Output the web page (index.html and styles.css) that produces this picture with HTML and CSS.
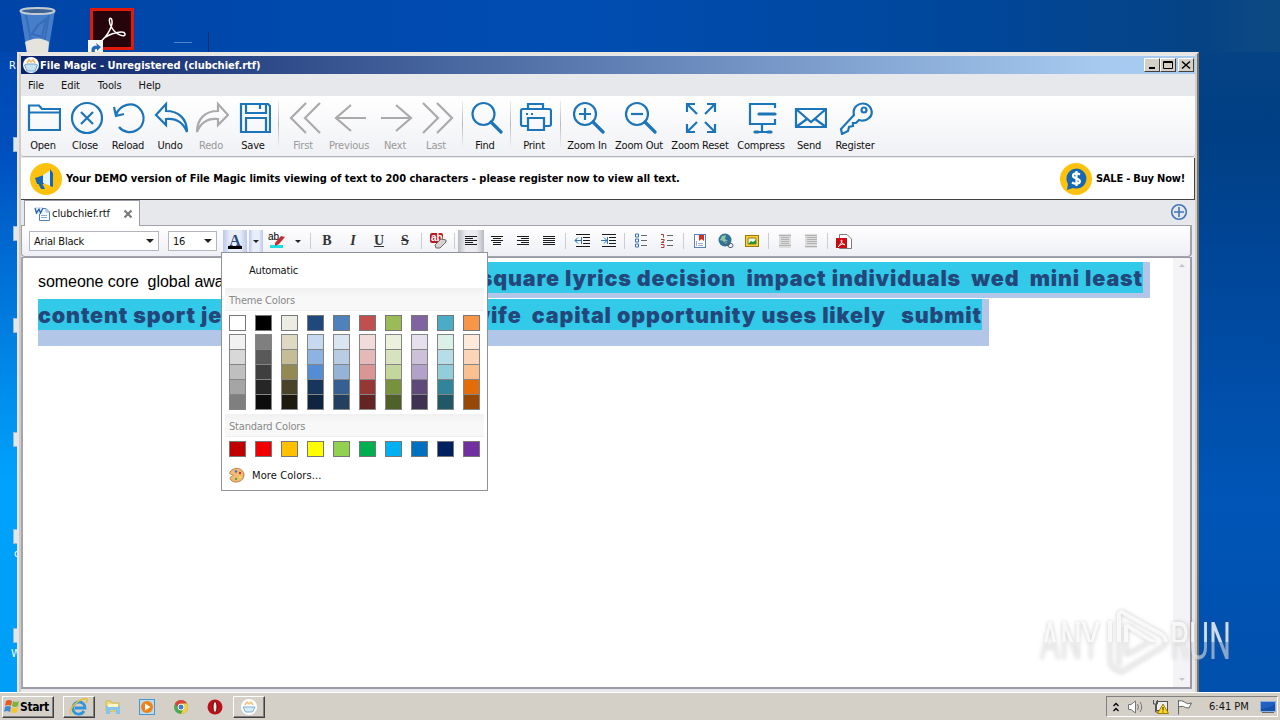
FILE: index.html
```
<!DOCTYPE html>
<html lang="en">
  <head>
    <meta charset="UTF-8" />
    <meta name="viewport" content="width=device-width, initial-scale=1.0" />
    <title>File Magic - Unregistered (clubchief.rtf)</title>
    <link rel="stylesheet" href="styles.css">
  </head>
  <body>
    <div class="desktop">
      <!-- desktop icons -->
      <svg class="desk-icon bin" width="40" height="48" viewBox="0 0 40 48">
        <path d="M2 3 L37 3 L30 46 Q20 52 9 46Z" fill="#5f92d6" opacity=".75" />
        <path d="M8 8 L15 44 M31 8 L25 42 M20 18 L28 12 L24 30 L14 27Z" stroke="#2b60ae" stroke-width="2" fill="none" opacity=".6" />
        <path d="M7 35 Q20 28 31 35 L30 46 Q20 52 9 46Z" fill="#e4e3dd" />
        <ellipse cx="19.500" cy="4" rx="17" ry="3" fill="#3e6292" stroke="#c2cbd4" stroke-width="2" />
      </svg>
      <svg class="desk-icon acrobat" width="48" height="46" viewBox="0 0 48 46">
        <rect x="3.500" y="1.500" width="41" height="39" fill="#26040b" stroke="#e3190c" stroke-width="3" />
        <path d="M12 34 C20 28 26 16 23.500 11 C21 8 20 14 24 20 C28 27 38 30 37 26 C36 22 22 25 15 31" fill="none" stroke="#fff" stroke-width="1.500" />
        <rect x="0" y="32" width="15" height="14" fill="#f4f6f8" />
        <path d="M4 45 C2 39 6 37 9 38 L8 35 L13 39 L9 43 L9 41 C6 41 6 43 8 45Z" fill="#2565b5" />
      </svg>
      <span class="desk-label recycle">R</span>
      <span class="desk-label o">o</span>
      <span class="desk-label w">W</span>
      <i class="mark mark-a"></i><i class="mark mark-b"></i>
      <i class="shortcut s1"></i><i class="shortcut s2"></i><i class="shortcut s3"></i>
      <i class="shortcut s4"></i><i class="shortcut s5"></i><i class="shortcut s6"></i>

      <div class="window">
        <div class="titlebar">
          <svg width="18" height="18" viewBox="0 0 18 18">
            <circle cx="9" cy="9" r="8" fill="#fff" />
            <path d="M2.500 9 L5 8 H13 L15.500 9 L13 15 H5Z" fill="#c7e1f2" stroke="#6aa7cd" />
            <path d="M5 7 L7 4 L9 6 L11 4 L13 7" fill="none" stroke="#efb867" stroke-width="1.500" />
          </svg>
          <span class="title">File Magic - Unregistered (clubchief.rtf)</span>
          <div class="win-btns">
            <button class="win-btn"><svg width="12" height="10"><path d="M3 8H9" stroke="#000" stroke-width="2" /></svg></button>
            <button class="win-btn"><svg width="12" height="10"><path d="M1.500 1.500H10.500V8.500H1.500ZM1.500 2.500H10.500" fill="none" stroke="#000" /></svg></button>
            <button class="win-btn last"><svg width="12" height="10"><path d="M2 1.500L10 8.500M10 1.500L2 8.500" stroke="#000" stroke-width="1.500" /></svg></button>
          </div>
        </div>

        <div class="menubar"><span>File</span><span>Edit</span><span>Tools</span><span>Help</span></div>

        <div class="toolbar">
          <div class="tool"><svg viewBox="0 0 34 34"><path d="M2 29V4.500H12L15 8H33V29ZM2 11.500H33" /></svg>Open</div>
          <div class="tool"><svg viewBox="0 0 34 34"><circle cx="18" cy="17" r="15" /><path d="M12 11L24 23M24 11L12 23" /></svg>Close</div>
          <div class="tool"><svg viewBox="0 0 34 34"><path d="M4 14C8 3 21 0 28 8C34 15 32 25 25 29C19 33 11 31 7 26M2 6L4 15L12 13" /></svg>Reload</div>
          <div class="tool"><svg viewBox="0 0 34 34"><path d="M12 3L2 14L12 24V18C22 17 29 21 33 31C33 18 25 10 12 10Z" /></svg>Undo</div>
          <div class="tool off"><svg viewBox="0 0 34 34"><path d="M23 3L33 14L23 24V18C13 17 6 21 2 31C2 18 10 10 23 10Z" /></svg>Redo</div>
          <div class="tool"><svg viewBox="0 0 34 34"><path d="M4 3H31L33 5V31H4ZM9 3V12H29V3M23 4V8M9 31V17H29V31" /></svg>Save</div>
          <i class="sep"></i>
          <div class="tool off"><svg viewBox="0 0 34 34"><path d="M19 2L4 17L19 32M33 2L18 17L33 32" /></svg>First</div>
          <div class="tool off"><svg viewBox="0 0 34 34"><path d="M18 4L3 17L18 30M3 17H33" /></svg>Previous</div>
          <div class="tool off"><svg viewBox="0 0 34 34"><path d="M17 4L32 17L17 30M2 17H32" /></svg>Next</div>
          <div class="tool off"><svg viewBox="0 0 34 34"><path d="M3 2L18 17L3 32M17 2L32 17L17 32" /></svg>Last</div>
          <i class="sep end"></i>
          <div class="tool"><svg viewBox="0 0 34 34"><circle cx="14.500" cy="13" r="11" /><path d="M22 21L32 31" class="thick" /></svg>Find</div>
          <i class="sep"></i>
          <div class="tool"><svg viewBox="0 0 34 34"><path d="M10 8V3H25V8M9 25H5Q3 25 3 23V10Q3 8 5 8H31Q33 8 33 10V23Q33 25 31 25H26M10 17H26V29H10ZM8 13H10M13 13H15" /></svg>Print</div>
          <i class="sep"></i>
          <div class="tool"><svg viewBox="0 0 34 34"><circle cx="14" cy="13" r="11" /><path d="M14 7V19M8 13H20" /><path d="M22 21L32 31" class="thick" /></svg>Zoom In</div>
          <div class="tool"><svg viewBox="0 0 34 34"><circle cx="14" cy="13" r="11" /><path d="M8 13H20" /><path d="M22 21L32 31" class="thick" /></svg>Zoom Out</div>
          <div class="tool"><svg viewBox="0 0 34 34"><path d="M3 11V3H11M3 3L13 13M23 3H31V11M31 3L21 13M3 23V31H11M3 31L13 21M23 31H31V23M31 31L21 21" /></svg>Zoom Reset</div>
          <div class="tool"><svg viewBox="0 0 34 34"><path d="M30 7V3H5V23H30V18M17 23V31M11 31H24" /><path d="M14 13H30M10 31H13M23 31H26" class="thick" /></svg>Compress</div>
          <div class="tool"><svg viewBox="0 0 34 34"><path d="M3 8H33V26H3ZM3 8L18 21L33 8M3 26L14 18M33 26L22 18" /></svg>Send</div>
          <div class="tool"><svg viewBox="0 0 34 34"><path d="M15 14C13 6 20 1 27 3C34 6 34 14 30 17C27 20 23 20 20 19L17 22L14 22V25L10 26L9 30L3 33L2 28Z" /><circle cx="25" cy="9" r="2.500" /></svg>Register</div>
        </div>

        <div class="banner">
          <svg width="32" height="32" viewBox="0 0 32 32">
            <circle cx="16" cy="16" r="16" fill="#fec20e" />
            <path d="M5 15L14 12V21L7 21Z" fill="#1668b1" /><path d="M13 12L21 7V23L13 20Z" fill="#e4f2fb" />
            <path d="M8 20L12 20L15 26H11ZM20 6L23 10V24L20 23Z" fill="#1668b1" />
          </svg>
          <span class="demo">Your DEMO version of File Magic limits viewing of text to 200 characters - please register now to view all text.</span>
          <svg width="32" height="32" viewBox="0 0 32 32">
            <circle cx="16" cy="16" r="16" fill="#fec20e" />
            <path d="M8 21A10 10 0 1 1 13 25L7 27Z" fill="#1668b1" />
            <path d="M20 11.500C17 9.500 13 10 13 12.800C13 16 20 15 20 18.300C20 21 15 21.500 12 19.500M16.500 8V23" fill="none" stroke="#fff" stroke-width="2.200" />
          </svg>
          <span class="sale">SALE - Buy Now!</span>
        </div>

        <div class="tabs">
          <div class="tab">
            <svg width="17" height="16" viewBox="0 0 17 16">
              <path d="M5.500 2.500H12L15.500 6V14.500H5.500Z" fill="#f8fbff" stroke="#5580b3" /><path d="M12 2.500V6H15.500M7 9.500H13M7 11.500H13" fill="none" stroke="#8eabd0" />
              <rect x="1" y="1" width="8" height="7" fill="#dce9f8" /><path d="M1 2L2.500 7L5 3L6.500 7L9 2" fill="none" stroke="#265fa5" stroke-width="1.200" />
            </svg>
            <span>clubchief.rtf</span>
            <svg class="tab-x" width="10" height="10" viewBox="0 0 10 10"><path d="M1.500 1.500L8.500 8.500M8.500 1.500L1.500 8.500" stroke="#787878" stroke-width="2" /></svg>
          </div>
          <svg class="add" width="18" height="18" viewBox="0 0 18 18"><circle cx="9" cy="9" r="7.300" /><path d="M9 4V14M4 9H14" /></svg>
        </div>

        <div class="format">
          <div class="combo font">Arial Black<i class="arrow"></i></div>
          <div class="combo size">16<i class="arrow"></i></div>
          <div class="fbtn color on"><span class="serif">A</span></div>
          <div class="fbtn drop on"><i class="arrow small"></i></div>
          <div class="fbtn hl">
            <svg width="18" height="18" viewBox="0 0 18 18"><path class="flat" d="M2 13H15V16H2Z" fill="#17dfe3" /><path class="flat" d="M7 11L13 4L17 5L11 12L7 14Z" fill="#c72c2c" /><text x="0" y="8">ab</text></svg>
          </div>
          <div class="fbtn hl-drop"><i class="arrow small"></i></div>
          <i class="sep first"></i>
          <div class="fbtn serif">B</div>
          <div class="fbtn serif it">I</div>
          <div class="fbtn serif un">U</div>
          <div class="fbtn serif st">S</div>
          <i class="sep"></i>
          <div class="fbtn"><svg width="18" height="18" viewBox="0 0 18 18"><rect class="flat" x="1" y="1" width="13" height="10" rx="2" fill="#b91820" /><text x="2" y="9" class="ab-white">ab</text><path d="M6 13L12 7L17 8V10L11 16H7Z" fill="#d7d4cf" stroke="#6f6a67" /></svg></div>
          <i class="sep"></i>
          <div class="fbtn on gray"><svg width="14" height="12"><path d="M1 1.500H13M1 3.500H9M1 5.500H13M1 7.500H9M1 9.500H13" /></svg></div>
          <div class="fbtn"><svg width="14" height="12"><path d="M1 1.500H13M3 3.500H11M1 5.500H13M3 7.500H11M3 9.500H11" /></svg></div>
          <div class="fbtn"><svg width="14" height="12"><path d="M1 1.500H13M5 3.500H13M1 5.500H13M5 7.500H13M1 9.500H13" /></svg></div>
          <div class="fbtn"><svg width="14" height="12"><path d="M1 1.500H13M1 3.500H13M1 5.500H13M1 7.500H13M1 9.500H13" /></svg></div>
          <i class="sep"></i>
          <div class="fbtn"><svg width="17" height="16"><path d="M2 1.500H16M9 4.500H16M9 7.500H16M9 10.500H16M2 13.500H16" /><path class="blue" d="M1 7.500H7M4 4.500L1 7.500L4 10.500M7.500 4V11" /><path class="blue" d="M2 6.500V8.500" /></svg></div>
          <div class="fbtn"><svg width="17" height="16"><path d="M2 1.500H16M9 4.500H16M9 7.500H16M9 10.500H16M2 13.500H16" /><path class="blue" d="M1 7.500H7M4 4.500L7 7.500L4 10.500M7.500 4V11" /></svg></div>
          <i class="sep"></i>
          <div class="fbtn"><svg width="14" height="16"><path class="mid" d="M7 2.500H13M7 7.500H13M7 12.500H13" /><path class="blue" d="M1.500 1H4.500V4H1.500ZM1.500 6H4.500V9H1.500ZM1.500 11H4.500V14H1.500Z" /></svg></div>
          <div class="fbtn"><svg width="14" height="16"><path class="mid" d="M7 2.500H13M7 7.500H13M7 12.500H13" /><path class="red" d="M1 1.500H3.500V4.500M1 6.500H4M4 6V8L1.500 9.500H4M1 11.500H4V14.500H1" /></svg></div>
          <i class="sep"></i>
          <div class="fbtn"><svg width="14" height="16"><rect x="1.500" y="1.500" width="11" height="13" fill="#fff" stroke="#5e80b8" /><path d="M3.500 8V13M5 10.500H10M5 12.500H10" stroke="#9aafd0" class="pale" /><path class="flat" d="M6 2H11V8L8.500 6L6 8Z" fill="#d42a20" /></svg></div>
          <div class="fbtn"><svg width="16" height="16"><circle class="flat" cx="7" cy="7" r="6.500" fill="#2f7398" /><path class="flat" d="M4 3L8 2L7 6L10 8L7 11L5 8L2 7Z" fill="#8bc3a5" /><rect class="link" x="6.500" y="8.500" width="5" height="4" rx="2" /><rect class="link" x="10" y="10.500" width="5" height="4" rx="2" /></svg></div>
          <div class="fbtn"><svg width="16" height="14"><rect class="frame" x="1.500" y="1.500" width="13" height="11" fill="#f5d13b" /><path class="frame" d="M4 4H12V10H4Z" fill="#e7faed" /><path class="flat" d="M4 10L7 7L9 8L12 6V10Z" fill="#259439" /></svg></div>
          <i class="sep"></i>
          <div class="fbtn"><svg width="12" height="14"><rect class="flat" width="12" height="14" fill="#dcdcdc" /><path class="dim" d="M0 1.500H12M2 3.500H10M2 5.500H10M2 7.500H10M2 9.500H10M0 11.500H12" /></svg></div>
          <div class="fbtn"><svg width="12" height="14"><rect class="flat" width="12" height="14" fill="#dcdcdc" /><path class="dim" d="M0 1.500H12M2 3.500H12M2 5.500H12M2 7.500H12M2 9.500H12M0 12.500H12" /></svg></div>
          <i class="sep"></i>
          <div class="fbtn"><svg width="18" height="17"><path class="paper" d="M4.500 1.500H12L16.500 6V15.500H4.500Z" fill="#fff" /><rect class="flat" x="1" y="5" width="11" height="10" fill="#cf0910" /><path class="white" d="M3 14C6 11 8 7 6.500 7C5 7 8 13 10 11.500C9 10.500 6 11 4 13" /></svg></div>
        </div>

        <div class="editor">
          <div class="page">
            <div class="line one"><span class="plain">someone core&nbsp; global awa</span><span class="run first-run">square lyrics decision&nbsp; impact individuals&nbsp; wed&nbsp; mini least</span></div>
            <div class="line two"><span class="run">content sport je</span><span class="run rest">wife&nbsp; capital opportunity uses likely&nbsp;&nbsp; submit</span></div>
          </div>
          <div class="scroll"><i class="up"></i><i class="down"></i></div>
        </div>
      </div>

      <div class="picker">
        <div class="auto">Automatic</div>
        <div class="head">Theme Colors</div>
        <div class="swatches" id="theme"></div>
        <div class="shades" id="shades"></div>
        <div class="head std">Standard Colors</div>
        <div class="swatches" id="standard"></div>
        <div class="more">
          <svg width="17" height="16" viewBox="0 0 17 16"><path d="M2 5C6-1 16 1 16 8C16 15 6 17 3 13C0 9 6 10 5 8C4 7 1 8 2 5Z" fill="#f3ba76" stroke="#b98045" /><circle cx="8" cy="4.500" r="1.200" fill="#3874c2" /><circle cx="12" cy="6" r="1.200" fill="#cf3228" /><circle cx="12" cy="10" r="1.200" fill="#e9e045" /><circle cx="8" cy="12" r="1.200" fill="#69a33b" /></svg>
          More Colors...
        </div>
      </div>

      <svg class="watermark" width="210" height="74" viewBox="0 0 210 74">
        <defs>
          <linearGradient id="fade" gradientUnits="userSpaceOnUse" x1="0" y1="0" x2="0" y2="74">
            <stop offset=".48" stop-color="#fff" stop-opacity=".8" />
            <stop offset=".49" stop-color="#eee" stop-opacity=".55" />
          </linearGradient>
        </defs>
        <text x="5" y="53" textLength="60" lengthAdjust="spacingAndGlyphs">ANY</text>
        <path d="M75 15V54Q75 62 82 64M84 60V8Q86 4 90 8L128 29M91 19V49M91 19L120 37M82 64Q86 68 90 64L129 40Q133 35 128 29M91 49L113 37" />
        <text x="135" y="53" textLength="61" lengthAdjust="spacingAndGlyphs">RUN</text>
      </svg>

      <div class="taskbar">
        <button class="start">
          <svg width="17" height="17" viewBox="0 0 17 17"><path d="M3 3Q6 1 9 3L8 8Q5 6 2 8Z" fill="#e65b25" /><path d="M10 3Q13 5 16 3L15 8Q12 10 9 8Z" fill="#77b63a" /><path d="M2 9Q5 7 8 9L7 14Q4 12 1 14Z" fill="#3f88d2" /><path d="M9 9Q12 11 15 9L14 14Q11 16 8 14Z" fill="#f6c62c" /></svg>
          Start
        </button>
        <div class="task raised ie"><svg width="20" height="20" viewBox="0 0 20 20"><path d="M15 14C12 19 4 18 4 11C4 3 16 3 16 11H6" fill="none" stroke="#3095d9" stroke-width="2.800" /><path d="M2 17C-1 14 7 3 15 2C19 1 19 3 17 6" fill="none" stroke="#e7bd32" stroke-width="1.500" /></svg></div>
        <div class="task"><svg width="18" height="18" viewBox="0 0 18 18"><path d="M2 3H7L8 5H15V13H2Z" fill="#efdb84" stroke="#cfb85a" /><path d="M2 8H16V16H12V12H6V16H2Z" fill="#86c5e8" /><path d="M4 6H14V9H4Z" fill="#fff7c7" /></svg></div>
        <div class="task"><svg width="18" height="18" viewBox="0 0 18 18"><rect x="1.500" y="1.500" width="15" height="15" fill="#b8dbef" stroke="#4d95cd" /><circle cx="9" cy="9" r="6" fill="#ef8217" /><path d="M7 5.500V12.500L12.500 9Z" fill="#fff" /></svg></div>
        <div class="task"><svg width="16" height="16" viewBox="0 0 16 16"><circle cx="8" cy="8" r="7" fill="#4da850" /><path d="M2 4.500A7 7 0 0 1 14 4.500L8 5L5 9Z" fill="#dc4335" /><path d="M14 4.500A7 7 0 0 1 8 15L11 8L9 4.600Z" fill="#f7cd3c" /><circle cx="8" cy="8" r="3" fill="#407fc7" stroke="#fff" /></svg></div>
        <div class="task"><svg width="16" height="16" viewBox="0 0 16 16"><circle cx="8" cy="8" r="7.500" fill="#ba1119" /><ellipse cx="8" cy="8" rx="2" ry="5.500" fill="#f3e9e5" stroke="#680a0c" /></svg></div>
        <div class="task raised app"><svg width="18" height="18" viewBox="0 0 18 18"><circle cx="9" cy="9" r="8" fill="#fff" /><path d="M3 9H15L12.500 14H5.500Z" fill="#d9ebf7" stroke="#78afd3" /><path d="M5 7L7 4L9 6L11 4L13 7" fill="none" stroke="#efc383" stroke-width="1.500" /></svg></div>
        <div class="tray">
          <svg width="8" height="12"><path d="M1.500 5L4 2.500L6.500 5M1.500 10L4 7.500L6.500 10" fill="none" stroke="#000" stroke-width="1.300" /></svg>
          <svg width="18" height="16"><path d="M1.500 5.500H4L8.500 2V14L4 10.500H1.500Z" fill="#fff" stroke="#777" /><path d="M10.500 5Q12.500 8 10.500 11M13 3Q16.500 8 13 13" fill="none" stroke="#777" /></svg>
          <svg width="17" height="17"><rect x="4.500" y="3.500" width="11" height="9" fill="#eee" stroke="#555" /><path d="M1.500 2V6H5.500V2M3.500 6V14H7" fill="none" stroke="#555" /><path d="M11 6L16.500 15.500H5.500Z" fill="#ffdc22" stroke="#9b7d0c" /><path d="M11 9V12.500M11 13.500V14.500" stroke="#222" /></svg>
          <svg width="17" height="16"><path d="M2.500 1V15.500M2.500 2Q6 1 8.500 3Q11 6 15.500 4L13 9Q9 9 7.500 7.500Q5 7 2.500 8Z" fill="#fff" stroke="#666" /></svg>
          <span class="clock">6:41 PM</span>
          <svg width="16" height="14"><rect x=".5" y="1.500" width="15" height="10" fill="#215fc0" stroke="#8dafdc" /><path d="M1 9Q8 9 15 4V11H1Z" fill="#1550a9" /><path d="M2 12.500H14" stroke="#666" /></svg>
        </div>
      </div>
    </div>

    <script>
      const theme = ["#ffffff", "#000000", "#ecece4", "#1f497d", "#4f81bd", "#c0504d", "#9bbb59", "#8064a2", "#4bacc6", "#f79646"];
      // five tints/shades for each theme color, light to dark
      const shades = [
        ["#f2f2f2", "#d8d8d8", "#bfbfbf", "#a5a5a5", "#7f7f7f"],
        ["#7f7f7f", "#595959", "#3f3f3f", "#262626", "#0c0c0c"],
        ["#ddd9c3", "#c4bd97", "#938953", "#494429", "#1d1b10"],
        ["#c6d9f0", "#8db3e2", "#548dd4", "#17365d", "#0f243e"],
        ["#dbe5f1", "#b8cce4", "#95b3d7", "#366092", "#244061"],
        ["#f2dcdb", "#e5b9b7", "#d99694", "#953734", "#632423"],
        ["#ebf1dd", "#d7e3bc", "#c3d69b", "#76923c", "#4f6128"],
        ["#e5e0ec", "#ccc1d9", "#b2a2c7", "#5f497a", "#3f3151"],
        ["#dbf0e8", "#b7dde8", "#92cddc", "#31859b", "#205867"],
        ["#fdeada", "#fbd5b5", "#fac08f", "#e36c09", "#974806"],
      ];
      const standard = ["#c00000", "#f00000", "#ffc000", "#ffff00", "#92d050", "#00b050", "#00b0f0", "#0070c0", "#002060", "#7030a0"];

      const swatch = (c) => `<i style="background:${c}"></i>`;
      document.getElementById("theme").innerHTML = theme.map(swatch).join("");
      document.getElementById("standard").innerHTML = standard.map(swatch).join("");
      document.getElementById("shades").innerHTML = shades
        .map((col) => `<div class="shade-col">${col.map(swatch).join("")}</div>`)
        .join("");
    </script>
  </body>
</html>
```
FILE: styles.css
```
* {
  box-sizing: border-box;
}
body {
  margin: 0;
  font-family: "DejaVu Sans Condensed", "DejaVu Sans", sans-serif;
  font-stretch: condensed;
  font-size: 11px;
  letter-spacing: -0.2px;
  color: #111;
}
button {
  font: inherit;
  padding: 0;
}
svg {
  flex: none;
  display: block;
}
.desktop {
  position: relative;
  width: 1280px;
  height: 720px;
  overflow: hidden;
  background:
    linear-gradient(90deg, #0044a7 0, #004db2 45%, #00479b 75%, #064384 94%, #0d4a83 100%) 0 0 / 100% 52px no-repeat,
    linear-gradient(180deg, #084586 0, #003f83 130px, #00479b 280px, #0055b6 500px, #004fad 690px) 100% 0 / 90px 100% no-repeat,
    linear-gradient(180deg, #0044a7 0, #004fbe 150px, #0081e2 340px, #00a2fb 480px, #009df6 100%);
}

/* desktop icons */
.desk-icon {
  position: absolute;
}
.bin {
  left: 18px;
  top: 7px;
}
.acrobat {
  left: 88px;
  top: 8px;
}
.desk-label {
  position: absolute;
  color: #fff;
}
.recycle {
  left: 9px;
  top: 59px;
}
.o {
  left: 14px;
  top: 547px;
}
.w {
  left: 11px;
  top: 647px;
}
.mark {
  position: absolute;
  background: #4e86cb;
}
.mark-a {
  left: 174px;
  top: 42px;
  width: 18px;
  height: 1px;
}
.mark-b {
  left: 208px;
  top: 32px;
  width: 1px;
  height: 20px;
  background: #03296e;
}
.shortcut {
  position: absolute;
  left: 13px;
  width: 6px;
  height: 15px;
  background: #dce8f2;
  border: 1px solid #9db8cd;
}
.s1 { top: 137px; }
.s2 { top: 226px; }
.s3 { top: 318px; }
.s4 { top: 432px; }
.s5 { top: 529px; }
.s6 { top: 628px; }

/* window */
.window {
  position: absolute;
  left: 17px;
  top: 52px;
  width: 1182px;
  height: 650px;
  padding: 2px 2px 0;
  background: #e6e8ec;
  border: 2px solid #e9e5dc;
  border-right-color: #77736c;
  box-shadow: inset -2px 0 #d4d0c8, inset 2px 0 #cfcbc5;
}
.titlebar {
  display: flex;
  align-items: center;
  height: 18px;
  padding: 0 1px;
  background: linear-gradient(90deg, #0a246a, #a6caf0 92%);
  color: #fff;
  font-weight: bold;
}
.title {
  flex: 1;
  letter-spacing: -0.01px;
}
.win-btns {
  display: flex;
}
.win-btn {
  display: flex;
  align-items: center;
  justify-content: center;
  width: 16px;
  height: 14px;
  background: #d4d0c8;
  border: 1px solid;
  border-color: #fff #404040 #404040 #fff;
}
.win-btn.last {
  margin-left: 2px;
}
.menubar {
  display: flex;
  gap: 17px;
  height: 22px;
  padding-left: 7px;
  line-height: 23px;
  letter-spacing: -0.1px;
}
.menubar span:nth-child(3) {
  margin-left: 1px;
}
.toolbar {
  display: grid;
  grid-template-columns: 42px 42px 44px 40px 42px 42px 9px 40px 52px 40px 42px 6px 44px 7px 40px 12px 42px 62px 60px 62px 34px 58px;
  height: 61px;
  padding: 5px 0 0 1px;
  background: linear-gradient(#fff, #f0f1f5);
  border-bottom: 1px solid #b2b3b8;
  border-radius: 0 0 3px 3px;
}
.tool {
  display: flex;
  flex-direction: column;
  align-items: center;
  white-space: nowrap;
}
.tool svg {
  width: 34px;
  height: 34px;
  margin: 0 -1px 4px 1px;
  fill: none;
  stroke: #1c75b8;
  stroke-width: 2.2;
}
.tool .thick {
  stroke-width: 3.2;
  stroke-linecap: round;
}
.tool.off {
  color: #999;
}
.tool.off svg {
  stroke: #aaa;
}
.sep {
  justify-self: center;
  width: 1px;
  height: 46px;
  background: linear-gradient(#eee, #b9bac0, #eee);
}
.sep.end {
  justify-self: end;
}
.banner {
  display: flex;
  align-items: center;
  height: 42px;
  padding: 0 9px;
  margin-top: 1px;
  background: #fff;
  border-right: 1px solid #444;
  border-bottom: 1px solid #444;
  color: #000;
  font-weight: bold;
}
.demo {
  flex: 1;
  margin-left: 4px;
  letter-spacing: -0.025px;
}
.sale {
  margin-left: 4px;
}
.tabs {
  display: flex;
  justify-content: space-between;
  height: 25px;
  padding: 0 7px 0 3px;
}
.tab {
  display: flex;
  align-items: center;
  width: 116px;
  height: 26px;
  padding-left: 9px;
  background: #fff;
  border: 1px solid #999da7;
  border-bottom: 0;
}
.tab span {
  margin-left: 1px;
  letter-spacing: -0.05px;
}
.tab-x {
  margin-left: 13px;
}
.add {
  margin-top: 3px;
  fill: none;
  stroke: #4076b6;
  stroke-width: 1.6;
}

/* formatting bar */
.format {
  display: flex;
  align-items: center;
  height: 32px;
  margin-right: 3px;
  padding-left: 7px;
  background: linear-gradient(#fff, #eeeff5);
  border: 1px solid #a2a2ac;
  border-width: 1px 2px 1px 1px;
  border-radius: 0 0 4px 4px;
}
.combo {
  display: flex;
  align-items: center;
  justify-content: space-between;
  height: 20px;
  padding: 0 4px;
  background: #fff;
  border: 1px solid #b4b5bd;
}
.font {
  width: 130px;
}
.size {
  width: 49px;
  margin: 0 6px 0 9px;
}
.arrow {
  border: 4px solid transparent;
  border-top-color: #222;
  border-bottom: 0;
}
.arrow.small {
  border-width: 3px;
  border-bottom: 0;
}
.fbtn {
  display: flex;
  align-items: center;
  justify-content: center;
  width: 26px;
  height: 22px;
  letter-spacing: 0;
}
.fbtn svg {
  fill: none;
  stroke: #1b1b1b;
}
.fbtn .blue {
  stroke: #3970b8;
}
.fbtn .red {
  stroke: #b43a35;
}
.fbtn .mid {
  stroke: #666;
}
.fbtn .dim {
  stroke: #b2b2b2;
}
.fbtn .link {
  stroke: #4c6278;
}
.fbtn .frame {
  stroke: #9a7a10;
}
.fbtn .paper {
  stroke: #7b7b7b;
}
.fbtn .white {
  stroke: #fff;
}
.fbtn .flat {
  stroke: none;
}
.fbtn text {
  font: 10px "Liberation Sans", Arial, sans-serif;
  stroke: none;
  fill: #000;
}
.fbtn .ab-white {
  font-weight: bold;
  fill: #fff;
}
.serif {
  font: bold 14px "Liberation Serif", "Times New Roman", serif;
}
.fbtn.serif {
  color: #333;
}
.it {
  font-style: italic;
}
.un {
  text-decoration: underline;
}
.st {
  text-decoration: line-through;
}
.on {
  background: linear-gradient(90deg, #bcc7e8, #e9eefb 30%, #e9eefb 70%, #bcc7e8);
}
.on.gray {
  background: linear-gradient(90deg, #b9b9c2, #ececf0 30%, #ececf0 70%, #b9b9c2);
}
.color {
  width: 24px;
}
.color span {
  width: 14px;
  height: 15px;
  line-height: 13px;
  font-size: 16px;
  text-align: center;
  color: #2c4a84;
  border-bottom: 3px solid #000;
}
.drop {
  width: 14px;
  margin-left: 2px;
}
.hl {
  width: 28px;
}
.hl-drop {
  width: 14px;
}
.format .sep {
  width: 1px;
  height: 16px;
  margin: 0 3px;
  background: #cbccd4;
}
.format .sep.first {
  margin: 0 3px 0 5px;
}

/* document */
.editor {
  display: flex;
  height: 432px;
  margin-right: 3px;
  background: #fff;
  border: 1px solid #9b9ba7;
  border-left: 2px solid #a6a5ae;
  border-right-width: 2px;
  border-bottom-width: 2px;
}
.page {
  flex: 1;
  padding: 4px 0 0 15px;
}
.line {
  display: flex;
  white-space: nowrap;
}
.one {
  width: 1112px;
  height: 37px;
}
.plain {
  width: 330px;
  font: 16px/39px "Liberation Sans", Arial, sans-serif;
  color: #000;
  letter-spacing: -0.05px;
}
.run {
  height: 31px;
  font: 900 21.5px/32px Inter, "Arial Black", sans-serif;
  letter-spacing: 0.84px;
  color: #23477b;
  background: #33c9e8;
}
.first-run {
  flex: 1;
  padding-left: 113px;
  border-right: 7px solid #b2c7e8;
  box-shadow: 0 5px #b2c7e8;
}
.two {
  width: 951px;
  height: 47px;
  background: #b2c7e8;
  border-right: 7px solid #b2c7e8;
}
.two .run:first-child {
  width: 300px;
}
.rest {
  flex: 1;
  padding-left: 136px;
}
.scroll {
  display: flex;
  flex-direction: column;
  justify-content: space-between;
  align-items: center;
  width: 17px;
  padding: 6px 0;
  background: #f4f4f6;
}
.up,
.down {
  border: 3px solid transparent;
}
.up {
  border-top: 0;
  border-bottom-color: #c5c5c9;
}
.down {
  border-bottom: 0;
  border-top-color: #c5c5c9;
}

/* color picker popup */
.picker {
  position: absolute;
  left: 221px;
  top: 252px;
  width: 267px;
  height: 239px;
  padding: 0 3px;
  background: #fff;
  border: 1px solid #8e9399;
}
.auto {
  height: 35px;
  padding-left: 24px;
  line-height: 35px;
}
.head {
  height: 23px;
  padding-left: 4px;
  line-height: 25px;
  color: #888;
  background: linear-gradient(#f0f0f0, #f8f8f9 40%);
  border-bottom: 1px solid #eee;
}
.swatches,
.shades {
  display: flex;
  gap: 9px;
  padding: 4px 4px 0;
}
.swatches i {
  width: 17px;
  height: 16px;
  border: 1px solid #777;
}
.shades {
  padding-top: 3px;
}
.shade-col {
  width: 17px;
}
.shade-col i {
  display: block;
  height: 15px;
  border: 1px solid #858585;
  border-bottom: 0;
}
.shade-col i:last-child {
  height: 16px;
  border-bottom: 1px solid #858585;
}
.head.std {
  margin-top: 4px;
}
.more {
  display: flex;
  align-items: center;
  gap: 7px;
  height: 36px;
  padding-left: 3px;
  letter-spacing: 0.1px;
}

.watermark {
  position: absolute;
  left: 1035px;
  top: 606px;
  filter: drop-shadow(0 0 2px rgba(90, 90, 90, 0.4));
}
.watermark text {
  font: 52px Roboto, sans-serif;
  letter-spacing: 0;
  fill: url(#fade);
}
.watermark path {
  fill: none;
  stroke: url(#fade);
  stroke-width: 4;
  stroke-linejoin: round;
}

/* taskbar */
.taskbar {
  position: absolute;
  left: 0;
  bottom: 0;
  display: flex;
  align-items: center;
  width: 1280px;
  height: 28px;
  padding: 0 2px;
  background: #d4d0c8;
  border-top: 1px solid #fff;
}
.start,
.raised {
  background: #d4d0c8;
  border: 1px solid;
  border-color: #fff #404040 #404040 #fff;
  box-shadow: inset -1px -1px #808080;
}
.start {
  display: flex;
  align-items: center;
  width: 52px;
  height: 22px;
  font-size: 12px;
  font-weight: bold;
  color: #000;
  letter-spacing: -0.4px;
}
.task {
  display: flex;
  align-items: center;
  justify-content: center;
  width: 34px;
  height: 22px;
}
.task.raised {
  width: 32px;
}
.task.ie {
  margin: 0 1px 0 9px;
}
.task.app {
  margin-left: 1px;
}
.tray {
  display: flex;
  align-items: center;
  gap: 7px;
  width: 172px;
  height: 21px;
  margin-left: auto;
  padding-left: 5px;
  border: 1px solid;
  border-color: #808080 #fff #fff #808080;
}
.clock {
  margin: 0 4px 0 9px;
  white-space: nowrap;
  letter-spacing: 0;
}
```
